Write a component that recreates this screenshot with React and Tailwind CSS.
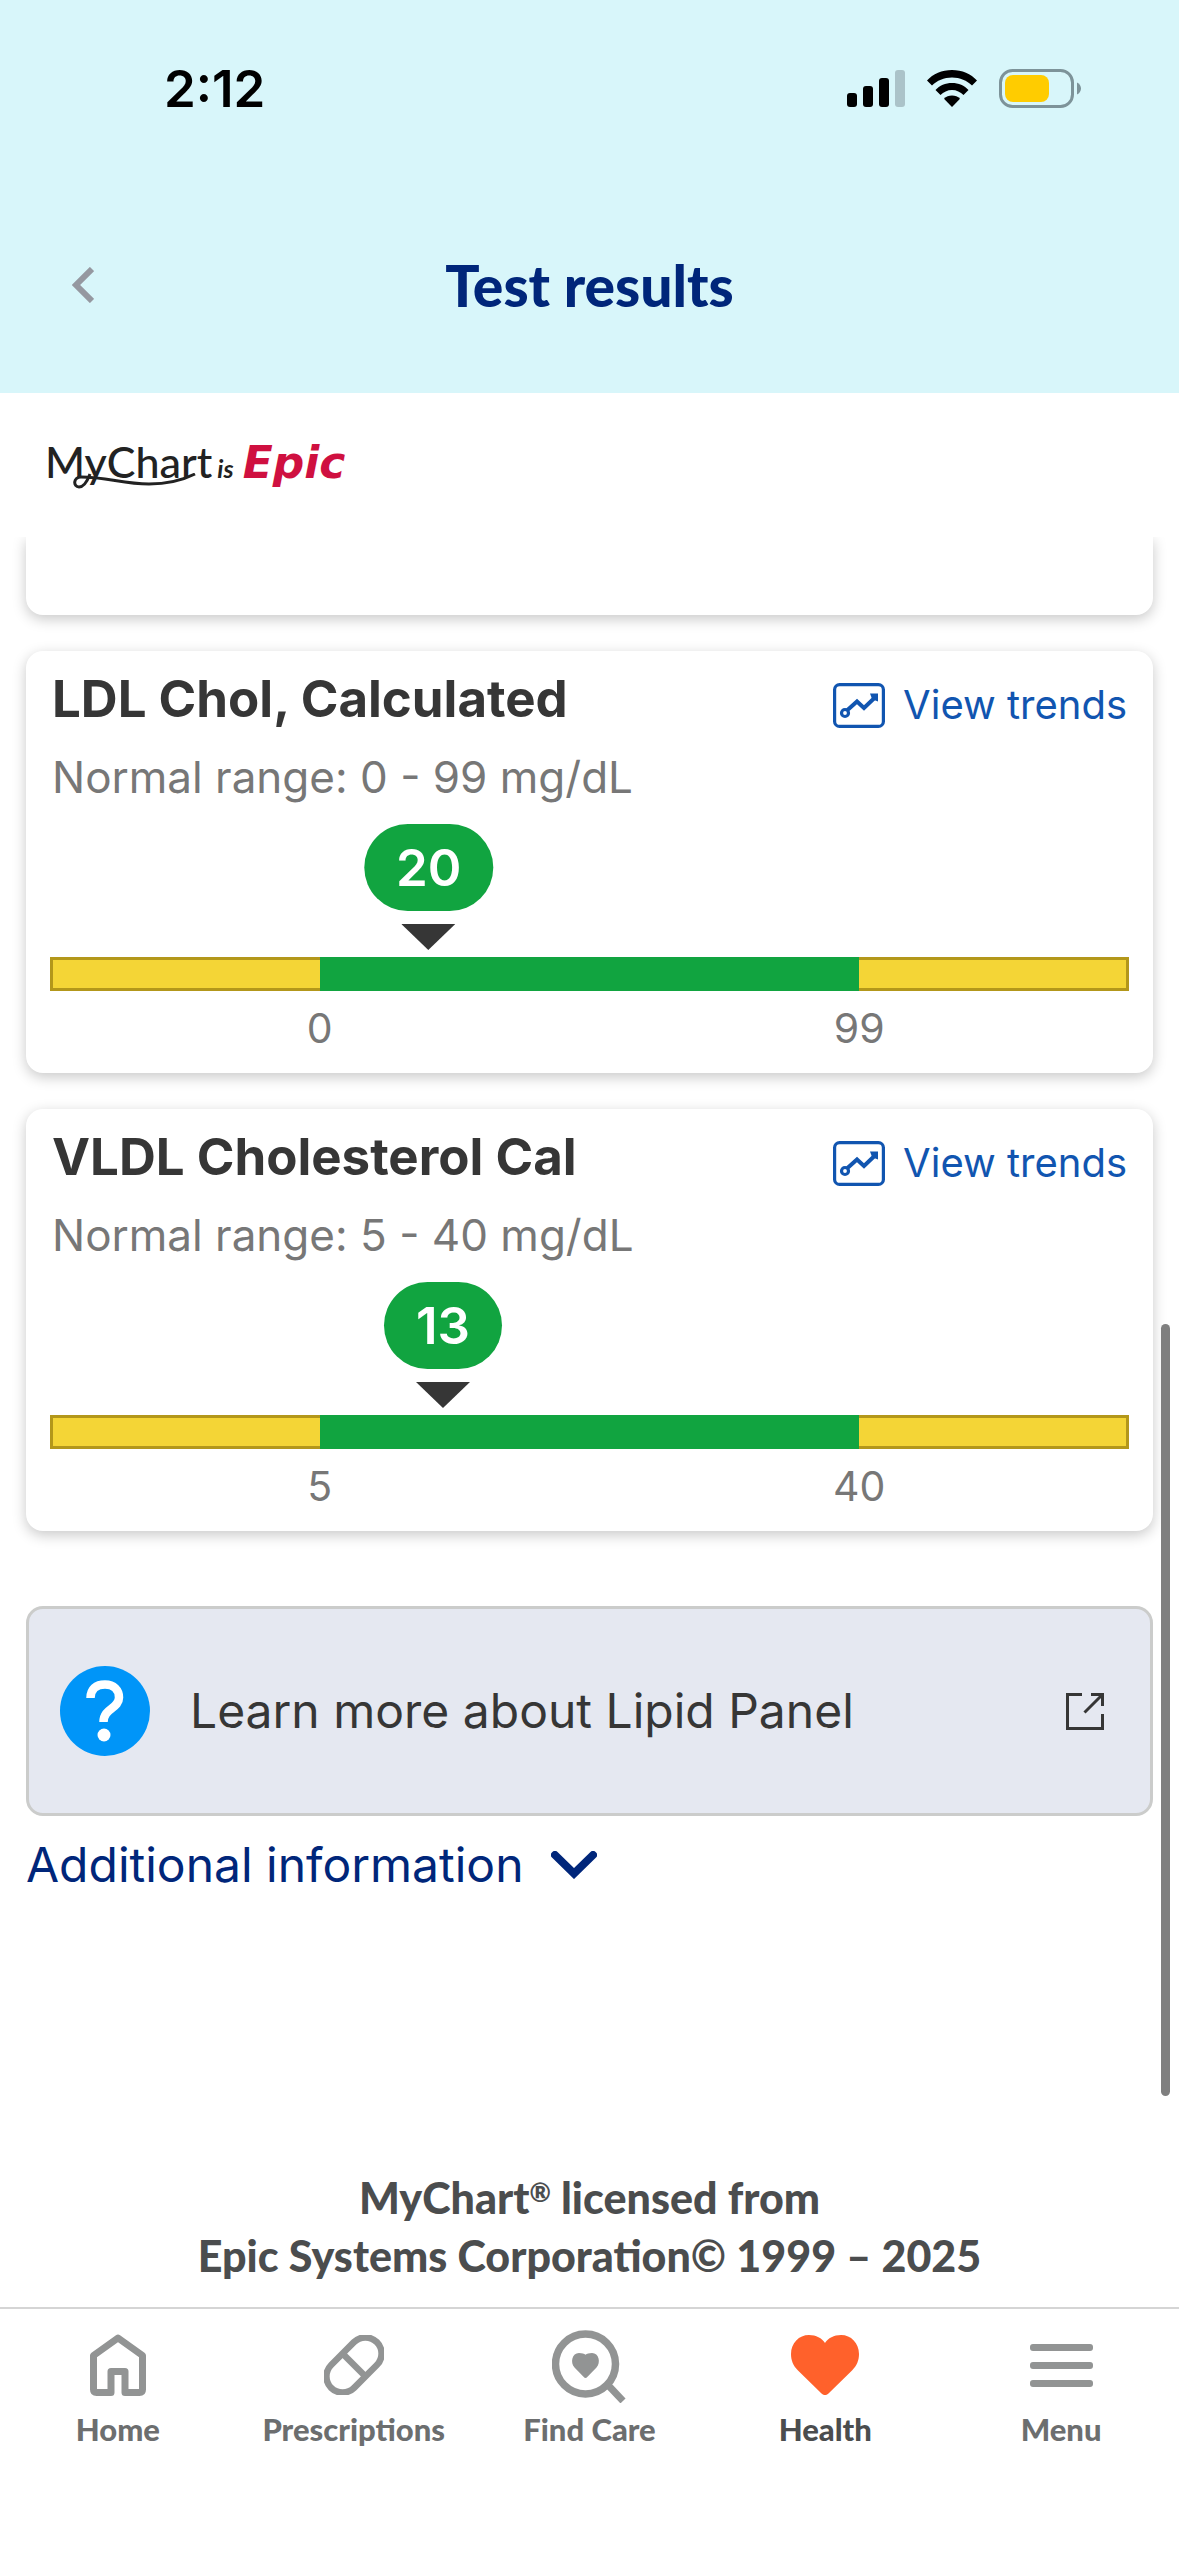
const results = [
  { name: 'LDL Chol, Calculated', low: 0, high: 99, value: 20, unit: 'mg/dL' },
  { name: 'VLDL Cholesterol Cal', low: 5, high: 40, value: 13, unit: 'mg/dL' },
];

function StatusBar() {
  return (
    <div className="flex h-[176px] items-center justify-between pl-[164px] pr-[98px]">
      <span className="text-[51px] font-semibold leading-none text-black">2:12</span>
      <div className="flex items-center gap-[22px]">
        <svg viewBox="0 0 58 37" className="h-[37px] w-[58px]" aria-hidden="true">
          <rect x="0" y="23" width="10" height="14" rx="3" />
          <rect x="16" y="16" width="10" height="21" rx="3" />
          <rect x="32" y="8" width="10" height="29" rx="3" />
          <rect x="48" y="0" width="10" height="37" rx="3" fill="#abc3c9" />
        </svg>
        <svg viewBox="0 0 50 37" className="h-[37px] w-[50px]" aria-hidden="true">
          <path d="M25 0C35 0 44 4 50 10.500L45 15.500C40 10.500 33 7.500 25 7.500S10 10.500 5 15.500L0 10.500C6 4 15 0 25 0Z" />
          <path d="M25 13C31.500 13 37.500 15.500 41.500 20L36.500 25C33.500 22 29.500 20 25 20S16.500 22 13.500 25L8.500 20C12.500 15.500 18.500 13 25 13Z" />
          <path d="M25 25.500C28 25.500 31 26.700 33 28.700L25 37L17 28.700C19 26.700 22 25.500 25 25.500Z" />
        </svg>
        <svg viewBox="0 0 82 39" className="h-[39px] w-[82px]" aria-hidden="true">
          <rect x="1.500" y="1.500" width="72" height="36" rx="12" fill="none" stroke="#7d9399" strokeWidth="3" />
          <rect x="6" y="6" width="44" height="27" rx="8" fill="#ffcc00" />
          <path d="M78 13.500C80.500 14.500 82 17 82 19.500S80.500 24.500 78 25.500Z" fill="#7d9399" />
        </svg>
      </div>
    </div>
  );
}

function Logo() {
  return (
    <a href="#mychart" aria-label="MyChart is Epic" className="relative flex items-baseline leading-[60px]">
      <span className="font-['Lato'] text-[43px] font-medium text-[#222]">MyChart</span>
      <span className="ml-[5px] font-['Lato'] text-[25px] font-bold italic text-[#222]">is</span>
      <span className="ml-[9px] font-['DejaVu_Sans'] text-[44px] font-bold italic text-[#cf1040]">Epic</span>
      <svg
        viewBox="0 0 124 16"
        className="absolute left-[28px] top-[41px] h-4 w-[124px]"
        fill="none"
        stroke="#222"
        aria-hidden="true"
      >
        <path d="M17 1C14 9 11 14 6 14C0 14 0 4 8 4C34 4 50 11 76 11C96 11 112 6 122 1" strokeWidth="3" />
      </svg>
    </a>
  );
}

function TrendsIcon() {
  return (
    <svg
      viewBox="0 0 52 45"
      className="h-[45px] w-[52px]"
      fill="none"
      stroke="currentColor"
      strokeWidth="3.200"
      aria-hidden="true"
    >
      <rect x="1.600" y="1.600" width="48.800" height="41.800" rx="5" />
      <circle cx="12" cy="30" r="3.500" />
      <path d="M14.500 27L24 18.500L31 25L43 13.500" strokeWidth="4" />
      <path d="M37 10.500H45V18.500L41 17L38.500 14.500Z" fill="currentColor" stroke="none" />
    </svg>
  );
}

function ResultCard({ result }) {
  const { name, low, high, value, unit } = result;
  // The normal range always fills the middle half of the bar.
  const position = 25 + ((value - low) / (high - low)) * 50;

  return (
    <section className="rounded-[17px] bg-white px-6 pb-[21px] pt-4 shadow-[0_4px_14px_rgba(0,0,0,0.22)]">
      <div className="flex items-start justify-between px-0.5">
        <h2 className="text-[51px] font-bold leading-[64px] text-[#363636]">{name}</h2>
        <a href="#trends" className="flex items-center gap-[18px] pt-2 text-[40px] leading-[60px] text-[#1155b0]">
          <TrendsIcon />
          View trends
        </a>
      </div>
      <p className="mt-3 px-0.5 text-[44px] leading-[60px] text-[#777]">
        Normal range: {low} - {high} {unit}
      </p>

      <div className="relative mt-[17px] h-[126px]">
        <div className="absolute flex -translate-x-1/2 flex-col items-center gap-[13px]" style={{ left: `${position}%` }}>
          <span className="rounded-full bg-[#11a440] px-8 text-[51px] font-semibold leading-[87px] text-white">
            {value}
          </span>
          <svg viewBox="0 0 54 26" className="h-[26px] w-[54px]" fill="#363636" aria-hidden="true">
            <path d="M0 0H54L27 26Z" />
          </svg>
        </div>
      </div>
      <div className="mt-[7px] flex h-[34px]">
        <div className="w-1/4 border-[3px] border-r-0 border-[#b3971a] bg-[#f4d536]" />
        <div className="w-1/2 bg-[#11a440]" />
        <div className="w-1/4 border-[3px] border-l-0 border-[#b3971a] bg-[#f4d536]" />
      </div>
      <div className="mt-[13px] flex text-center text-[41px] leading-[48px] text-[#777]">
        <span className="w-1/2">{low}</span>
        <span className="w-1/2">{high}</span>
      </div>
    </section>
  );
}

const navItems = [
  {
    label: 'Home',
    icon: (
      <svg viewBox="0 0 56 62" className="h-[62px] w-[56px]" fill="none" stroke="currentColor" strokeWidth="7" aria-hidden="true">
        <path d="M28 4L52.500 21.500V55.500Q52.500 58.500 49.500 58.500H35V37.500H21V58.500H6.500Q3.500 58.500 3.500 55.500V21.500Z" strokeLinejoin="round" />
      </svg>
    ),
  },
  {
    label: 'Prescriptions',
    icon: (
      <svg viewBox="0 0 60 60" className="h-[60px] w-[60px]" fill="none" stroke="currentColor" strokeWidth="6.500" aria-hidden="true">
        <rect x="-2.300" y="13.800" width="64.600" height="32.400" rx="16.200" transform="rotate(-45 30 30)" />
        <path d="M19 19L41 41" />
      </svg>
    ),
  },
  {
    label: 'Find Care',
    icon: (
      <svg viewBox="0 0 75 75" className="h-[75px] w-[75px]" fill="none" stroke="currentColor" aria-hidden="true">
        <circle cx="33.500" cy="36" r="30" strokeWidth="7.500" />
        <path d="M55 56L71 73" strokeWidth="7" />
        <path
          d="M33.500 50C32.800 50 32.300 49.600 31.500 48.800L22.500 39.500C18 34.500 20 25 27 25C30 25 32.200 25.800 33.500 26.800C34.800 25.800 37 25 40 25C47 25 49 34.500 44.500 39.500L35.500 48.800C34.700 49.600 34.200 50 33.500 50Z"
          fill="currentColor"
          stroke="none"
        />
      </svg>
    ),
  },
  {
    label: 'Health',
    active: true,
    icon: (
      <svg viewBox="0 0 68 60" className="h-[60px] w-[68px]" fill="#ff612b" aria-hidden="true">
        <path d="M34 60C32.500 60 31.500 59.500 30 58L7 35.500C2 30.500 0 25 0 19C0 8 8 0 18 0C25 0 31 3 34 8C37 3 43 0 50 0C60 0 68 8 68 19C68 25 66 30.500 61 35.500L38 58C36.500 59.500 35.500 60 34 60Z" />
      </svg>
    ),
  },
  {
    label: 'Menu',
    icon: (
      <svg viewBox="0 0 63 43" className="h-[43px] w-[63px]" fill="currentColor" aria-hidden="true">
        <rect y="0" width="63" height="7" rx="3" />
        <rect y="18" width="63" height="7" rx="3" />
        <rect y="36" width="63" height="7" rx="3" />
      </svg>
    ),
  },
];

export default function App() {
  return (
    <div className="relative flex min-h-screen flex-col bg-white font-['Inter',sans-serif]">
      <header className="relative z-10 bg-white">
        <div className="bg-[#d8f6fa]">
          <StatusBar />
          <div className="grid h-[217px] grid-cols-[1fr_auto_1fr] items-center px-[72px]">
            <button type="button" aria-label="Back" className="justify-self-start text-[#9598a0]">
              <svg viewBox="0 0 22 36" className="h-9 w-[22px]" fill="none" stroke="currentColor" strokeWidth="6" aria-hidden="true">
                <path d="M20 2L4 18L20 34" />
              </svg>
            </button>
            <h1 className="font-['Lato'] text-[57px] font-black leading-[60px] text-[#00267a]">Test results</h1>
          </div>
        </div>
        <div className="flex h-36 items-center px-[45px]">
          <Logo />
        </div>
      </header>

      <main className="flex-1 px-[26px]">
        <div className="flex flex-col gap-9">
          <div className="h-[78px] rounded-b-[17px] bg-white shadow-[0_4px_14px_rgba(0,0,0,0.22)]" />
          {results.map((result) => (
            <ResultCard key={result.name} result={result} />
          ))}
        </div>

        <a
          href="#lipid-panel"
          className="mt-[75px] flex h-[210px] items-center rounded-[17px] border-[3px] border-[#cbcccb] bg-[#e5e8f1] pl-[31px] pr-[46px]"
        >
          <svg viewBox="0 0 90 90" className="h-[90px] w-[90px]" aria-hidden="true">
            <circle cx="45" cy="45" r="45" fill="#0095f8" />
            <path
              d="M30.500 32C30.500 23 36 18.500 45 18.500C54 18.500 59 24 59 31.500C59 43 43.500 42 43.500 56"
              fill="none"
              stroke="#fff"
              strokeWidth="8.500"
            />
            <circle cx="44" cy="69" r="6.500" fill="#fff" />
          </svg>
          <span className="ml-10 flex-1 text-[48px] leading-[60px] text-[#363636]">Learn more about Lipid Panel</span>
          <svg viewBox="0 0 38 37" className="h-[37px] w-[38px]" fill="none" stroke="#363636" strokeWidth="3" aria-hidden="true">
            <path d="M16 1.500H1.500V35.500H36.500V21" />
            <path d="M25 1.500H36.500V13M36.500 1.500L18.500 19.500" />
          </svg>
        </a>

        <button type="button" className="mt-[19px] flex items-center gap-7 text-[48px] leading-[60px] text-[#00267a]">
          Additional information
          <svg viewBox="0 0 46 28" className="h-7 w-[46px]" fill="none" stroke="currentColor" strokeWidth="8" aria-hidden="true">
            <path d="M4 4L23 22.500L42 4" strokeLinecap="round" />
          </svg>
        </button>
      </main>

      <footer className="pb-[22px] text-center font-['Lato'] text-[43px] font-black leading-[58px] text-[#4b4d4e]">
        MyChart<span className="align-[12px] text-[26px] leading-none">®</span> licensed from
        <br />
        Epic Systems Corporation© 1999 – 2025
      </footer>

      <nav className="grid h-[249px] grid-cols-5 border-t-2 border-[#d5d5d5] pt-4">
        {navItems.map(({ label, icon, active }) => (
          <a
            key={label}
            href="#nav"
            aria-current={active ? 'page' : undefined}
            className="flex flex-col items-center text-[#929494]"
          >
            <span className="flex h-20 items-center">{icon}</span>
            <span
              className={`mt-1 font-['Lato'] text-[31px] font-black leading-[40px] ${
                active ? 'text-[#4b4d4e]' : 'text-[#6c6e6f]'
              }`}
            >
              {label}
            </span>
          </a>
        ))}
      </nav>

      {/* scroll indicator */}
      <div className="absolute right-[9px] top-[1324px] h-[772px] w-[9px] rounded-full bg-[#7f7f7f]" />
    </div>
  );
}
